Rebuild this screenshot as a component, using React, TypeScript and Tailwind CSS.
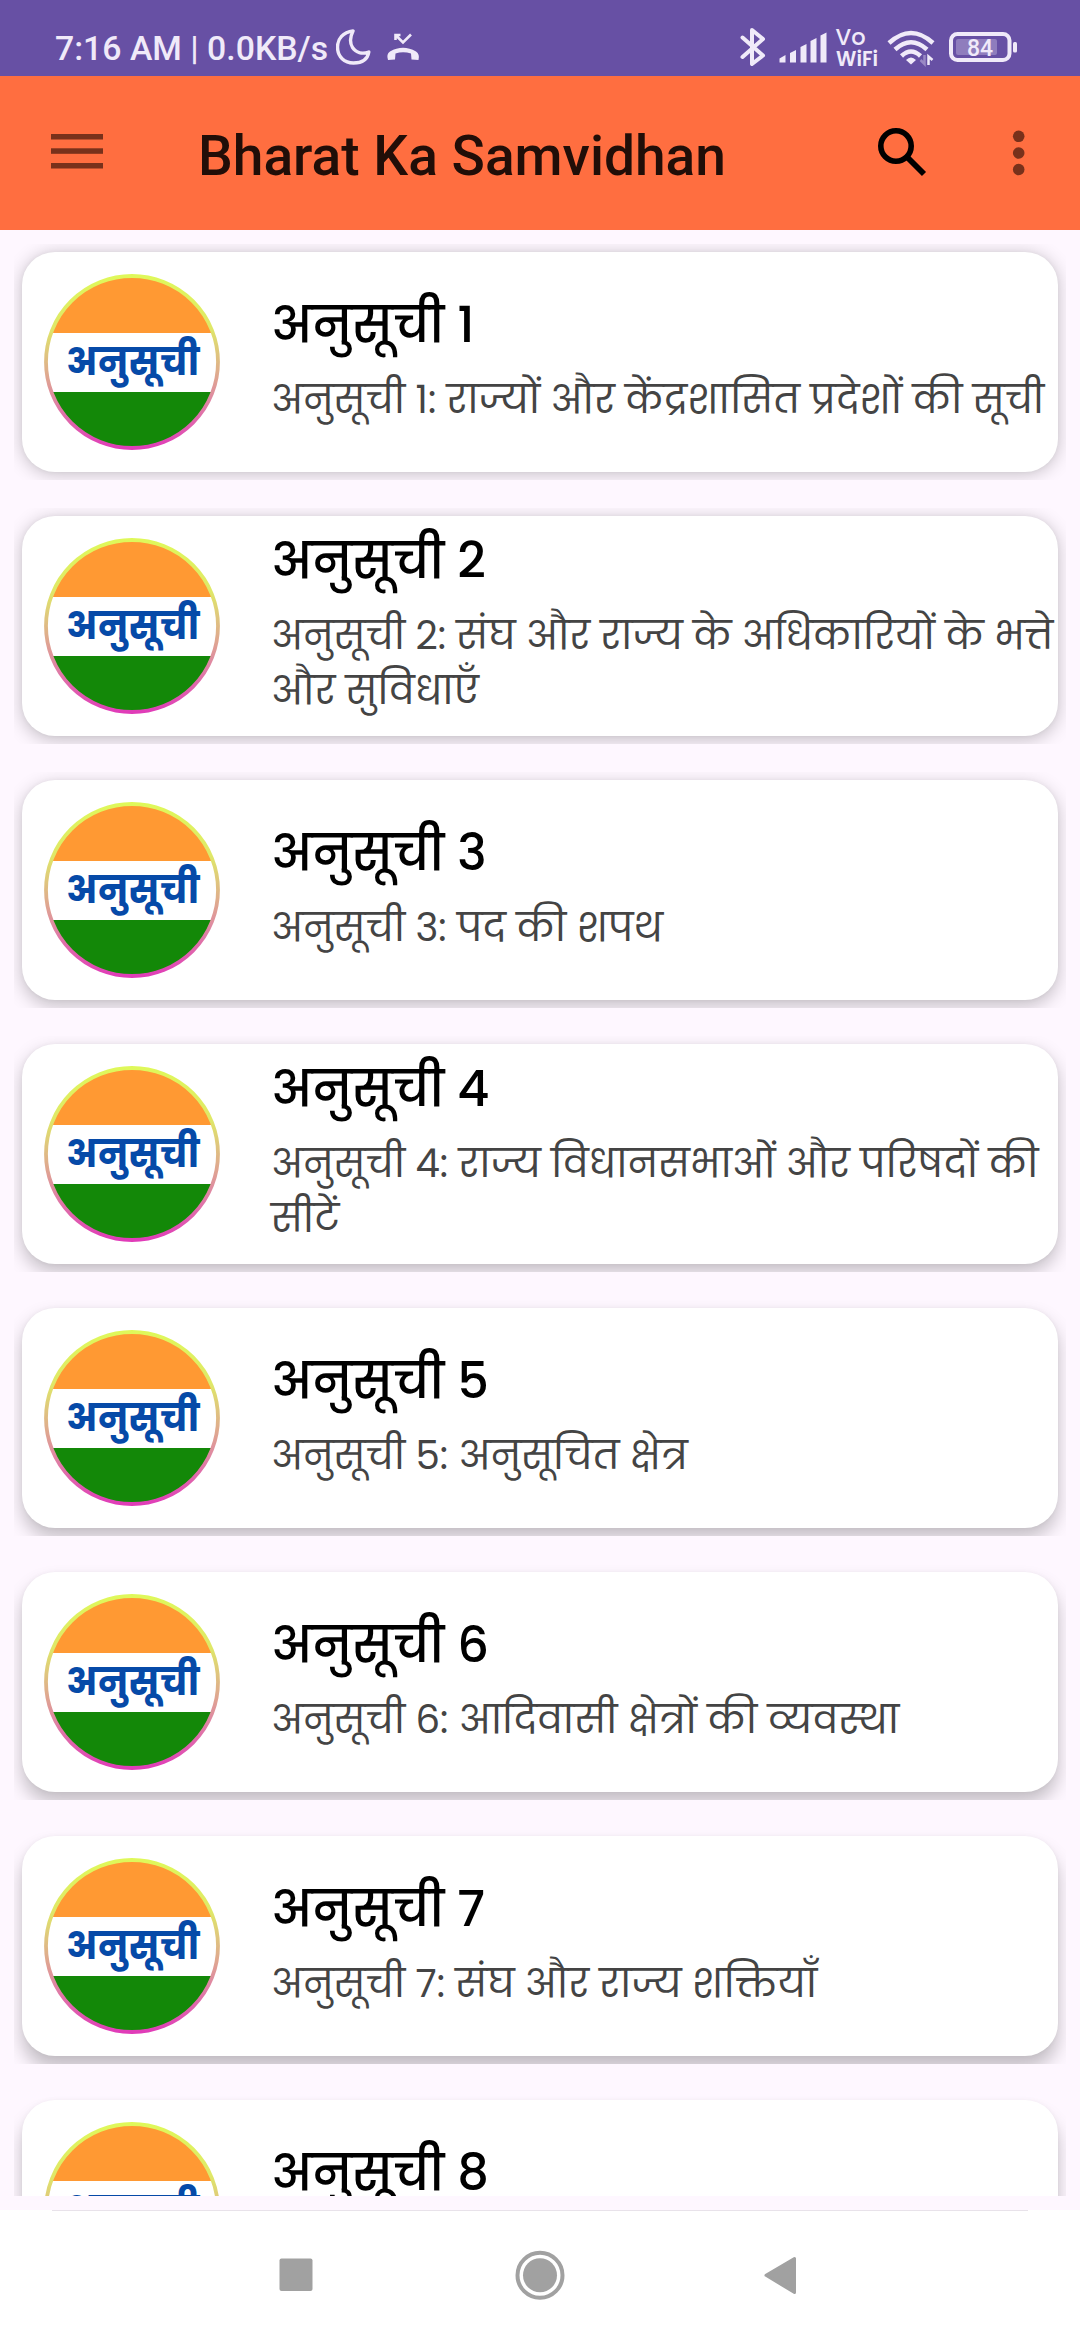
import type { ReactNode } from "react";

type Schedule = { title: string; lines: string[] };

const schedules: Schedule[] = [
  { title: "अनुसूची 1", lines: ["अनुसूची 1: राज्यों और केंद्रशासित प्रदेशों की सूची"] },
  { title: "अनुसूची 2", lines: ["अनुसूची 2: संघ और राज्य के अधिकारियों के भत्ते", "और सुविधाएँ"] },
  { title: "अनुसूची 3", lines: ["अनुसूची 3: पद की शपथ"] },
  { title: "अनुसूची 4", lines: ["अनुसूची 4: राज्य विधानसभाओं और परिषदों की", "सीटें"] },
  { title: "अनुसूची 5", lines: ["अनुसूची 5: अनुसूचित क्षेत्र"] },
  { title: "अनुसूची 6", lines: ["अनुसूची 6: आदिवासी क्षेत्रों की व्यवस्था"] },
  { title: "अनुसूची 7", lines: ["अनुसूची 7: संघ और राज्य शक्तियाँ"] },
  { title: "अनुसूची 8", lines: [] },
];

const StatusBar = () => (
  <div className="flex h-[76px] items-start justify-between bg-[#6750a4] text-[#f0eaf9]">
    <div className="flex pl-[55px]">
      <span className="mt-[29px] w-[281px] whitespace-nowrap text-[33.8px] leading-[40px] font-medium">
        7:16 AM | 0.0KB/s
      </span>
      <svg className="mt-[28px] h-[40px] w-[90px]" viewBox="336 28 90 40" fill="none">
        <path
          d="M353 31C343 32 337.500 39 337.500 47C337.500 57 344.500 63 353.500 63C361 63 367.500 60 368.800 52C362 54.500 356 52.500 352.500 47.500C349.500 42.500 350.500 36 353 31Z"
          stroke="currentColor"
          strokeWidth="3.400"
          strokeLinejoin="round"
        />
        <path d="M395.500 40V35H400.500M396 35.500L403 42.500L411 34.500" stroke="currentColor" strokeWidth="2.600" />
        <path
          d="M388 60Q386 54 390 51.500Q403 44 416 51.500Q420 54 418.500 60L411.500 59.500L411 53.500Q403 51 395.500 53.500L395 59.500Z"
          fill="currentColor"
        />
      </svg>
    </div>
    <svg className="mt-[26px] h-[42px] w-[344px]" viewBox="736 26 344 42" fill="none">
      <path
        d="M742.500 37.500L763 55.500L752 64V30L763 39L742.500 57"
        stroke="currentColor"
        strokeWidth="4"
        strokeLinecap="round"
        strokeLinejoin="round"
      />
      <g fill="currentColor">
        <path d="M779.500 58.500L785.500 55V62.500H779.500Z" />
        <path d="M790 53L796 50V62.500H790Z" />
        <path d="M800.500 47L806.500 44V62.500H800.500Z" />
        <path d="M810.500 41L816.500 38V62.500H810.500Z" />
        <path d="M820.500 35.500L826.500 32.500V62.500H820.500Z" />
      </g>
      <g className="font-['Poppins','Inter',sans-serif]" fill="currentColor" fontWeight="500">
        <text x="835.500" y="45" fontSize="23" textLength="30" lengthAdjust="spacingAndGlyphs">
          Vo
        </text>
        <text x="836" y="65.500" fontSize="21.500" fontWeight="600" textLength="42" lengthAdjust="spacingAndGlyphs">
          WiFi
        </text>
      </g>
      <g stroke="currentColor" strokeWidth="4.500">
        <path d="M889 43Q911 23 933 43" />
        <path d="M895 49.500Q911 35 927 49.500" />
        <path d="M901.500 56Q911 47 920.500 56" />
      </g>
      <path d="M906 60Q911 55 916 60L911 64.500Z" fill="currentColor" />
      <path d="M924.500 55V64L920.500 60" stroke="#9a89c4" strokeWidth="2.500" />
      <path d="M928.500 65V56.500L932.500 60" stroke="currentColor" strokeWidth="2.500" />
      <rect x="951" y="34" width="58.500" height="26" rx="6.500" stroke="currentColor" strokeWidth="4" />
      <rect x="956" y="39" width="41" height="16" rx="2" fill="#8f7dbd" />
      <rect x="1013" y="42" width="4" height="10.500" rx="1.500" fill="currentColor" />
      <text x="980" y="55.500" fontSize="23" fontWeight="500" fill="currentColor" textAnchor="middle">
        84
      </text>
    </svg>
  </div>
);

const AppBar = () => (
  <div className="flex h-[154px] items-center bg-[#ff6e40]">
    <svg className="h-[154px] w-[198px]" viewBox="0 76 198 154" fill="#78311b">
      <rect x="51" y="134" width="52" height="5.500" />
      <rect x="51" y="148.300" width="52" height="5.500" />
      <rect x="51" y="163" width="52" height="5.500" />
    </svg>
    <h1 className="mt-[6px] flex-1 whitespace-nowrap text-[55.1px] leading-[64px] font-medium text-[#210e08]">
      Bharat Ka Samvidhan
    </h1>
    <svg className="h-[154px] w-[220px]" viewBox="860 76 220 154" fill="none">
      <circle cx="896" cy="146" r="15.200" stroke="#000" strokeWidth="5.600" />
      <path d="M908 158L924 174" stroke="#000" strokeWidth="5.800" />
      <g fill="#78311b">
        <circle cx="1018.700" cy="136.300" r="5.800" />
        <circle cx="1018.700" cy="153" r="5.800" />
        <circle cx="1018.700" cy="169.500" r="5.800" />
      </g>
    </svg>
  </div>
);

const Badge = ({ id }: { id: string }) => (
  <svg className="h-[176px] w-[176px] shrink-0" viewBox="0 0 176 176">
    <defs>
      <linearGradient id={`${id}-ring`} x1="0" y1="0" x2="0" y2="1">
        <stop offset="0" stopColor="#dff85a" />
        <stop offset="0.300" stopColor="#dfe868" />
        <stop offset="0.700" stopColor="#df8ca0" />
        <stop offset="1" stopColor="#e03cb8" />
      </linearGradient>
      <clipPath id={`${id}-disc`}>
        <circle cx="88" cy="88" r="85" />
      </clipPath>
    </defs>
    <g clipPath={`url(#${id}-disc)`}>
      <rect width="176" height="59" fill="#ff9933" />
      <rect y="59" width="176" height="59" fill="#fff" />
      <rect y="118" width="176" height="58" fill="#138808" />
    </g>
    <circle cx="88" cy="88" r="86" fill="none" stroke={`url(#${id}-ring)`} strokeWidth="3.800" />
    <text
      x="22"
      y="101"
      fontSize="37.500"
      fontWeight="700"
      fill="#064aa8"
      className="font-['Poppins','Inter',sans-serif]"
    >
      अनुसूची
    </text>
  </svg>
);

// The shadow drops further the lower the card sits on the screen
const Card = ({ index, children }: { index: number; children: ReactNode }) => (
  <div className="mb-[28px] h-[236px] shrink-0 overflow-hidden p-[8px]">
    <div
      className="flex h-[220px] items-center rounded-[33px] bg-white pl-[22px]"
      style={{
        boxShadow: `0 ${2 + index * 1.8}px 18px rgba(0, 0, 0, 0.23), 0 0 5px rgba(0, 0, 0, 0.04)`,
      }}
    >
      {children}
    </div>
  </div>
);

const NavBar = () => (
  <div className="h-[130px] bg-white">
    <div className="mx-[52px] h-px bg-[#e8e2ea]" />
    <svg className="h-[129px] w-[1080px]" viewBox="0 2211 1080 129" fill="#a1a1a1">
      <rect x="279.500" y="2258.500" width="33" height="32.500" rx="2" />
      <circle cx="540" cy="2275.300" r="22.500" fill="none" stroke="#a1a1a1" strokeWidth="4" />
      <circle cx="540" cy="2275.300" r="17" />
      <path d="M766 2275.300L794.500 2258.500V2292.500Z" stroke="#a1a1a1" strokeWidth="3" strokeLinejoin="round" />
    </svg>
  </div>
);

export default function App() {
  return (
    <div className="flex h-[2340px] w-[1080px] flex-col overflow-hidden bg-[#fef7ff] font-['Roboto',sans-serif]">
      <StatusBar />
      <AppBar />
      <main className="flex h-[1966px] shrink-0 flex-col overflow-hidden px-[14px] pt-[14px]">
        {schedules.map((item, i) => (
          <Card key={item.title} index={i}>
            <Badge id={`badge-${i}`} />
            <div className="ml-[51px] pb-2 whitespace-nowrap font-['Poppins','Inter',sans-serif]">
              <h2 className="mb-3 text-[49.6px] leading-[70px] font-medium text-black">{item.title}</h2>
              <div className="min-h-[55px]">
                {item.lines.map((line) => (
                  <p key={line} className="text-[38.73px] leading-[55px] font-normal text-[#444]">
                    {line}
                  </p>
                ))}
              </div>
            </div>
          </Card>
        ))}
      </main>
      <div className="h-[14px] shrink-0" />
      <NavBar />
    </div>
  );
}
